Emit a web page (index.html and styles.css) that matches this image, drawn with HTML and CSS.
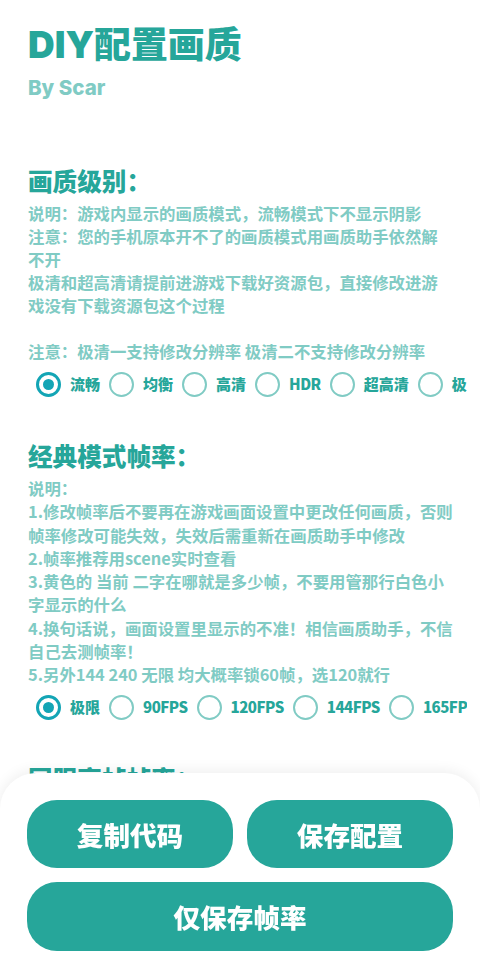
FILE: index.html
```html
<!DOCTYPE html>
<html lang="zh-CN">
<head>
<meta charset="utf-8">
<title>DIY配置画质</title>
<link rel="stylesheet" href="styles.css">
</head>
<body>
<main class="page">
  <h1 class="title">DIY配置画质</h1>
  <div class="subtitle">By Scar</div>

  <section class="section first">
    <h2 class="heading">画质级别：</h2>
    <p class="desc">说明：游戏内显示的画质模式，流畅模式下不显示阴影<br>注意：您的手机原本开不了的画质模式用画质助手依然解不开<br>极清和超高清请提前进游戏下载好资源包，直接修改进游戏没有下载资源包这个过程<br><br>注意：极清一支持修改分辨率 极清二不支持修改分辨率</p>
    <div class="radios">
      <label class="radio checked"><span class="dot"></span><span class="lbl">流畅</span></label>
      <label class="radio"><span class="dot"></span><span class="lbl">均衡</span></label>
      <label class="radio"><span class="dot"></span><span class="lbl">高清</span></label>
      <label class="radio"><span class="dot"></span><span class="lbl en">HDR</span></label>
      <label class="radio"><span class="dot"></span><span class="lbl">超高清</span></label>
      <label class="radio"><span class="dot"></span><span class="lbl">极清</span></label>
    </div>
  </section>

  <section class="section">
    <h2 class="heading">经典模式帧率：</h2>
    <p class="desc lines2">说明：<br>1.修改帧率后不要再在游戏画面设置中更改任何画质，否则帧率修改可能失效，失效后需重新在画质助手中修改<br>2.帧率推荐用scene实时查看<br>3.黄色的 当前 二字在哪就是多少帧，不要用管那行白色小字显示的什么<br>4.换句话说，画面设置里显示的不准！相信画质助手，不信自己去测帧率！<br>5.另外144 240 无限 均大概率锁60帧，选120就行</p>
    <div class="radios">
      <label class="radio checked"><span class="dot"></span><span class="lbl">极限</span></label>
      <label class="radio"><span class="dot"></span><span class="lbl en">90FPS</span></label>
      <label class="radio"><span class="dot"></span><span class="lbl en">120FPS</span></label>
      <label class="radio"><span class="dot"></span><span class="lbl en">144FPS</span></label>
      <label class="radio"><span class="dot"></span><span class="lbl en">165FPS</span></label>
    </div>
  </section>

  <section class="section">
    <h2 class="heading">国服高帧帧率：</h2>
  </section>
</main>

<div class="sheet">
  <div class="row">
    <button class="btn">复制代码</button>
    <button class="btn">保存配置</button>
  </div>
  <button class="btn wide">仅保存帧率</button>
</div>
</body>
</html>
```

FILE: styles.css
```css
html, body {
  margin: 0;
  padding: 0;
  background: #ffffff;
  overflow: hidden;
  height: 963px;
}

body {
  font-family: "Noto Sans CJK SC", "Noto Sans", sans-serif;
  color: #26a69a;
}

.page {
  padding: 22px 26.5px 0 28px;
}

.title {
  margin: 0;
  font-family: Inter, "Noto Sans CJK SC", sans-serif;
  font-size: 36.9px;
  line-height: 46px;
  font-weight: 900;
  color: #26a69a;
}

.subtitle {
  margin-top: 6px;
  font-family: Inter, "Noto Sans CJK SC", sans-serif;
  font-size: 20.5px;
  line-height: 28px;
  font-weight: 800;
  color: #80cbc4;
}

.section {
  margin-top: 39px;
}

.section.first {
  margin-top: 62px;
}

.heading {
  margin: 0;
  font-size: 24.6px;
  line-height: 32px;
  font-weight: 900;
  color: #26a69a;
}

.desc {
  margin: 6px 0 0;
  font-size: 16.4px;
  line-height: 23px;
  font-weight: 700;
  color: #80cbc4;
}

.desc.lines2 {
  line-height: 23.25px;
}

.radios {
  display: flex;
  align-items: center;
  height: 32px;
  margin-top: 5px;
  margin-right: -13.5px;
  padding-left: 8px;
  white-space: nowrap;
  overflow: hidden;
  gap: 9px;
}

.radio {
  display: flex;
  align-items: center;
  gap: 9px;
  flex-shrink: 0;
}

.dot {
  box-sizing: border-box;
  width: 25px;
  height: 25px;
  border-radius: 50%;
  border: 2.5px solid #80cbc4;
  display: flex;
  align-items: center;
  justify-content: center;
  flex-shrink: 0;
}

.radio.checked .dot {
  border: 3px solid #13a5b5;
}

.radio.checked .dot::after {
  content: "";
  width: 11px;
  height: 11px;
  border-radius: 50%;
  background: #13a5b5;
}

.lbl {
  font-size: 15px;
  line-height: 20px;
  font-weight: 900;
  color: #26a69a;
}

.lbl.en {
  letter-spacing: -0.5px;
}

.sheet {
  position: fixed;
  left: 0;
  right: 0;
  bottom: 0;
  height: 190px;
  box-sizing: border-box;
  padding: 27px 27px 12px;
  background: #ffffff;
  border-radius: 36px 36px 0 0;
  box-shadow: 0 -2px 14px rgba(0, 0, 0, 0.07);
  display: flex;
  flex-direction: column;
  gap: 14px;
}

.row {
  display: flex;
  gap: 14px;
}

.btn {
  flex: 1;
  height: 68px;
  border: none;
  border-radius: 30px;
  background: #26a69a;
  color: #ffffff;
  font-family: "Noto Sans CJK SC", "Noto Sans", sans-serif;
  font-size: 26.6px;
  font-weight: 900;
  padding: 0;
}

.btn.wide {
  flex: none;
  width: 100%;
  height: 69px;
}
```
